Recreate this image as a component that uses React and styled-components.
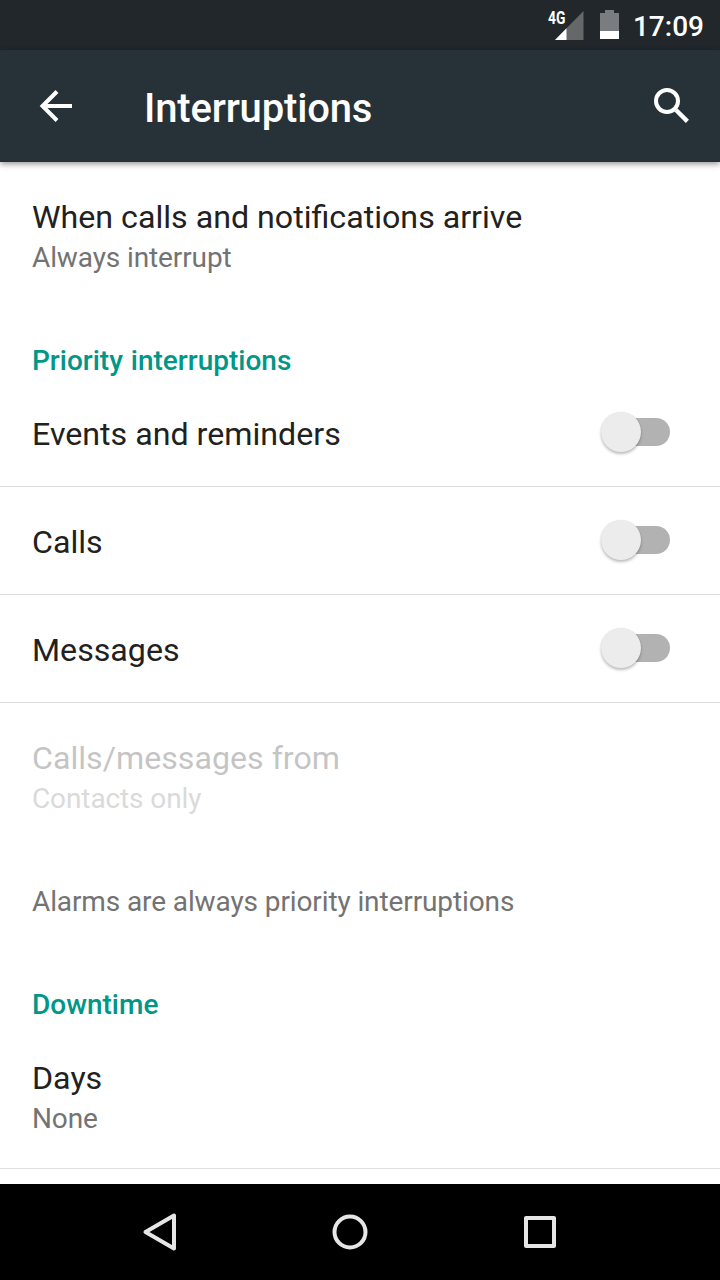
import styled, { createGlobalStyle } from "styled-components";

const GlobalStyle = createGlobalStyle`
  * {
    box-sizing: border-box;
  }
  body {
    margin: 0;
    background: #fff;
    font-family: Roboto, "Noto Sans", sans-serif;
  }
`;

const Screen = styled.div`
  display: flex;
  flex-direction: column;
  width: 720px;
  height: 1280px;
  overflow: hidden;
`;

const StatusBar = styled.div`
  display: flex;
  flex: none;
  justify-content: flex-end;
  height: 50px;
  padding-right: 16px;
  background: #21272b;
`;

const NetworkLabel = styled.span`
  width: 18px;
  height: 20px;
  margin-top: 8px;
  margin-right: -11px;
  font-size: 17.5px;
  font-weight: 700;
  line-height: 20px;
  transform: scaleX(0.79);
  transform-origin: left;
  color: #fff;
`;

const StatusIcon = styled.svg`
  flex: none;
  margin-right: ${(props) => props.$gap}px;
`;

const Clock = styled.span`
  font-size: 28px;
  font-weight: 500;
  line-height: 54px;
  color: #fff;
`;

const AppBar = styled.header`
  display: flex;
  flex: none;
  align-items: center;
  height: 112px;
  padding: 0 24px 0 32px;
  background: #263238;
  color: #fff;
  box-shadow: 0 2px 6px rgba(0, 0, 0, 0.42);
  z-index: 1;
`;

const Title = styled.h1`
  flex: 1;
  margin: 6px 0 0 64px;
  font-size: 40px;
  font-weight: 500;
  line-height: 48px;
  letter-spacing: -0.17px;
`;

const List = styled.main`
  flex: 1;
  min-height: 0;
  overflow: hidden;
`;

const Row = styled.div`
  display: flex;
  justify-content: space-between;
  height: ${(props) => (props.$tall ? 146 : 108)}px;
  padding: 34px 48px 0 32px;
  border-bottom: ${(props) => (props.$divider ? "1px solid #dedede" : "none")};
  opacity: ${(props) => (props.$disabled ? 0.26 : 1)};
`;

const Label = styled.div`
  font-size: 32.18px;
  line-height: 42px;
  color: #212121;
`;

const Summary = styled.div`
  font-size: 28px;
  line-height: 40px;
  letter-spacing: -0.11px;
  color: #737373;
`;

const Note = styled(Summary)`
  height: 103px;
  padding: 33px 32px 0;
`;

const SectionTitle = styled.h2`
  height: 71px;
  margin: 0;
  padding: 33px 32px 0;
  font-size: 28px;
  font-weight: 500;
  line-height: 40px;
  word-spacing: 1px;
  color: #009688;
`;

const Track = styled.div`
  display: flex;
  align-items: center;
  width: 68px;
  height: 28px;
  margin-top: 5px;
  margin-right: 2px;
  border-radius: 14px;
  background: linear-gradient(to right, transparent 20px, #b2b2b2 20px);
`;

const Thumb = styled.div`
  width: 40px;
  height: 40px;
  margin-left: -1px;
  border-radius: 50%;
  background: #ececec;
  box-shadow: 0 2px 3px rgba(0, 0, 0, 0.26), 0 0 1px rgba(0, 0, 0, 0.1);
`;

const NavBar = styled.nav`
  flex: none;
  height: 96px;
  background: #000;
`;

const Toggle = () => (
  <Track>
    <Thumb />
  </Track>
);

const Item = ({ label, summary, toggle, divider, disabled }) => (
  <Row $tall={Boolean(summary)} $divider={divider} $disabled={disabled}>
    <div>
      <Label>{label}</Label>
      {summary && <Summary>{summary}</Summary>}
    </div>
    {toggle && <Toggle />}
  </Row>
);

const App = () => {
  return (
    <Screen>
      <GlobalStyle />
      <StatusBar>
        <NetworkLabel>4G</NetworkLabel>
        <StatusIcon $gap={16} width="29" height="50">
          <path d="M28.5 11v29H0z" fill="#646869" />
          <path d="M11.500 28.300V40H0z" fill="#fff" />
        </StatusIcon>
        <StatusIcon $gap={14} width="19" height="50">
          <path d="M5 10h9v3h5v18H0V13h5z" fill="#7a7d80" />
          <path d="M0 31h19v8H0z" fill="#fff" />
        </StatusIcon>
        <Clock>17:09</Clock>
      </StatusBar>

      <AppBar>
        <svg width="48" height="48" viewBox="0 0 48 48" fill="none">
          <path
            d="M40 24H10M25 9.500L10.500 24 25 38.500"
            stroke="#fff"
            strokeWidth="4"
          />
        </svg>
        <Title>Interruptions</Title>
        <svg width="48" height="48" viewBox="0 0 48 48" fill="none" stroke="#fff">
          <circle cx="19" cy="19" r="11" strokeWidth="4" />
          <path d="M28 28L39.400 39.400" strokeWidth="4.400" />
        </svg>
      </AppBar>

      <List>
        <Item
          label="When calls and notifications arrive"
          summary="Always interrupt"
        />
        <SectionTitle>Priority interruptions</SectionTitle>
        <Item label="Events and reminders" toggle divider />
        <Item label="Calls" toggle divider />
        <Item label="Messages" toggle divider />
        <Item label="Calls/messages from" summary="Contacts only" disabled />
        <Note>Alarms are always priority interruptions</Note>
        <SectionTitle>Downtime</SectionTitle>
        <Item label="Days" summary="None" divider />
      </List>

      <NavBar>
        <svg
          width="720"
          height="96"
          fill="none"
          stroke="#e6e6e6"
          strokeWidth="4"
          strokeLinejoin="round"
        >
          <path d="M174 31.500v33L145.500 48z" />
          <circle cx="350" cy="48" r="15.500" />
          <rect x="526" y="34" width="28" height="28" />
        </svg>
      </NavBar>
    </Screen>
  );
};

export default App;
